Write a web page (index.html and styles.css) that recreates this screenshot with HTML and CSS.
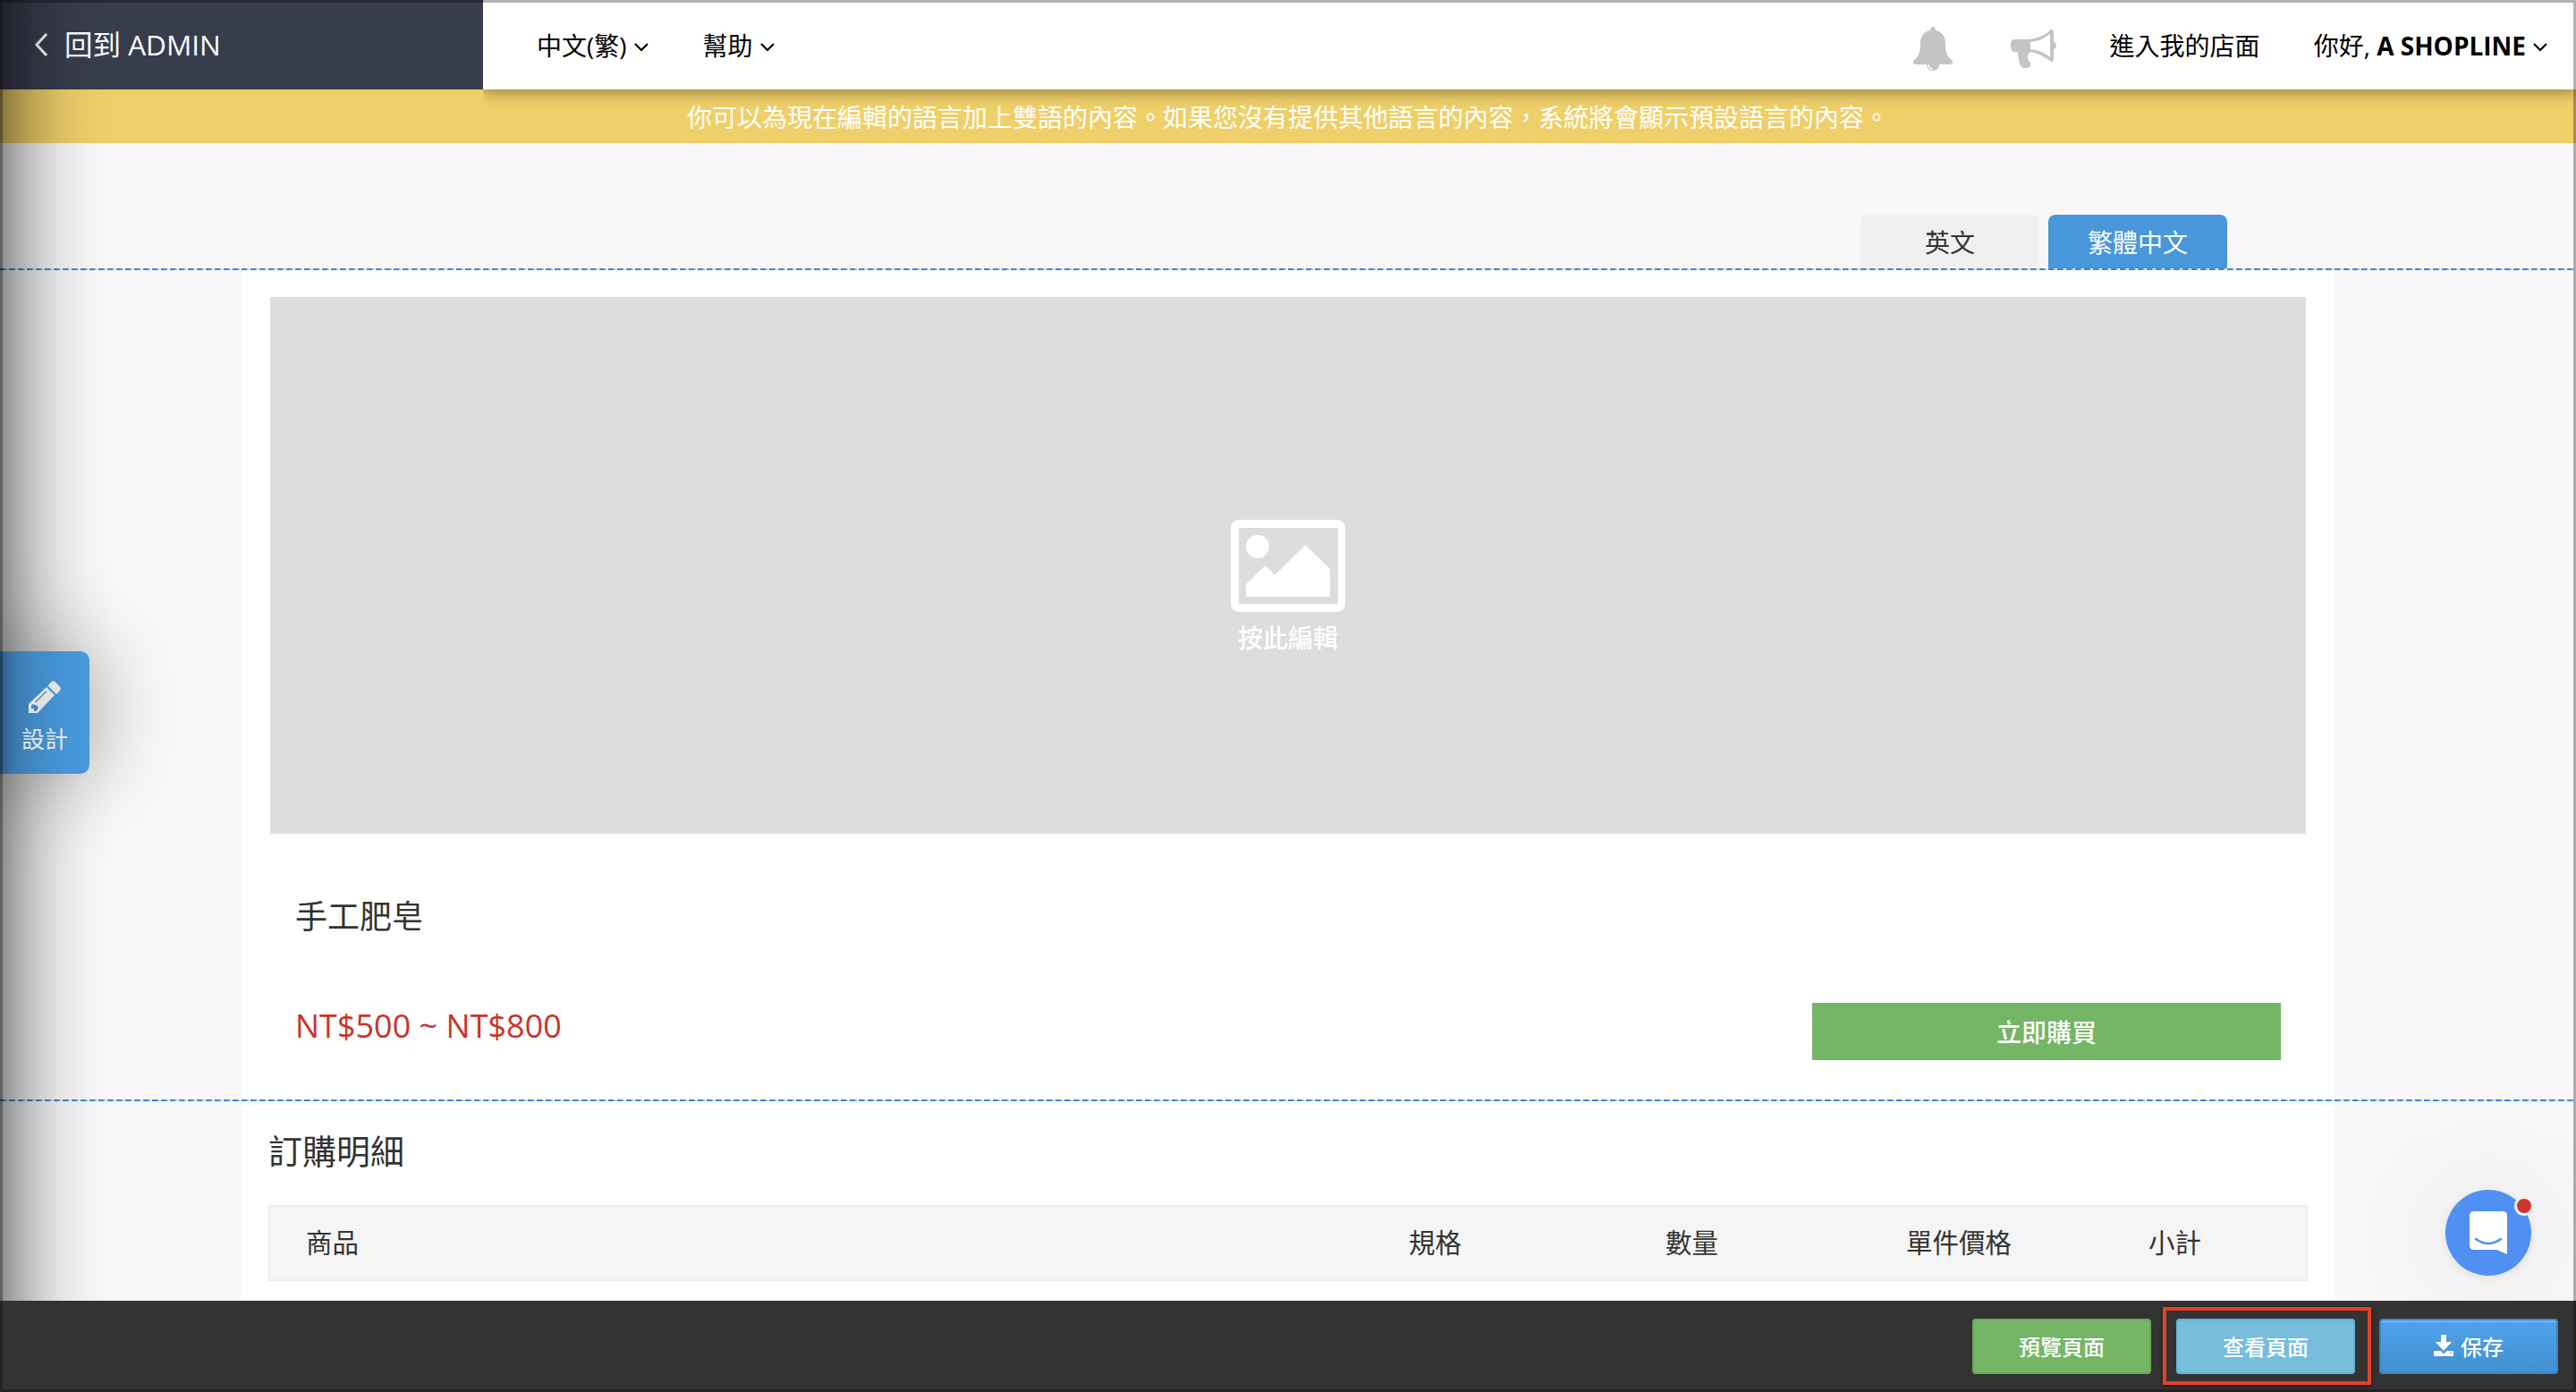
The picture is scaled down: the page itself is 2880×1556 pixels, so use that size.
FILE: index.html
```
<!DOCTYPE html>
<html lang="zh-Hant">
<head>
    <meta charset="UTF-8">
    <meta name="viewport" content="width=device-width, initial-scale=1.0">
    <title>SHOPLINE 頁面編輯</title>
    <link rel="stylesheet" href="styles.css">
</head>
<body>
    <header class="topbar">
        <a class="back-link">
            <svg class="back-icon" width="16" height="28" viewBox="0 0 16 28"><path d="M14 2L3 14L14 26" fill="none" stroke="currentColor" stroke-width="3"/></svg>
            <span>回到 ADMIN</span>
        </a>
        <nav class="topnav">
            <a class="nav-item nav-lang">中文(繁)<svg class="chevron" width="16" height="10" viewBox="0 0 16 10"><path d="M1 1L8 8L15 1" fill="none" stroke="currentColor" stroke-width="2.2"/></svg></a>
            <a class="nav-item nav-help">幫助<svg class="chevron" width="16" height="10" viewBox="0 0 16 10"><path d="M1 1L8 8L15 1" fill="none" stroke="currentColor" stroke-width="2.2"/></svg></a>
            <div class="nav-right">
                <svg class="icon-bell" width="46" height="50" viewBox="0 0 46 50">
                    <path d="M23 0C25 0 26 2 26 4C33 5 37 11 37 18C37 29 39 33 44 37C46 39 45 42 43 42H30C30 46 27 49 23 49S16 46 16 42H3C1 42 0 39 2 37C7 33 9 29 9 18C9 11 13 5 20 4C20 2 21 0 23 0Z"/>
                    <path d="M18 42C18 45 20 47 23 47" fill="none" stroke="#fff" stroke-width="1.4"/>
                </svg>
                <svg class="icon-horn" width="52" height="44" viewBox="0 0 52 44">
                    <path fill-rule="evenodd" d="M5 11H17C29 11 37 7 44 1C46 -1 48 0 48 3V14C52 15 52 21 48 22V33C48 36 46 37 44 35C37 30 31 27 22 25C17 29 19 33 22 38C24 43 16 44 12 42C9 37 8 30 8 25H5C2 25 0 23 0 20V16C0 13 2 11 5 11ZM22 14V22C31 23 38 26 44 31V5C38 10 31 13 22 14Z"/>
                </svg>
                <a class="nav-item nav-store">進入我的店面</a>
                <a class="nav-item nav-user">你好, <b>A SHOPLINE</b><svg class="chevron" width="16" height="10" viewBox="0 0 16 10"><path d="M1 1L8 8L15 1" fill="none" stroke="currentColor" stroke-width="2.2"/></svg></a>
            </div>
        </nav>
    </header>

    <div class="notice">你可以為現在編輯的語言加上雙語的內容。如果您沒有提供其他語言的內容，系統將會顯示預設語言的內容。</div>

    <div class="lang-tabs">
        <button class="tab">英文</button>
        <button class="tab active">繁體中文</button>
    </div>

    <main class="page">
        <section class="section">
            <div class="section-inner product">
                <div class="image-upload">
                    <svg width="128" height="103" viewBox="0 0 128 103" fill="#fff">
                        <path fill-rule="evenodd" d="M11 0H117Q128 0 128 11V92Q128 103 117 103H11Q0 103 0 92V11Q0 0 11 0ZM11 9Q9 9 9 11V92Q9 94 11 94H117Q120 94 120 92V11Q120 9 117 9Z"/>
                        <circle cx="30" cy="30" r="13"/>
                        <path d="M17 72L38.500 51L49 62L83.500 28L111 55V86H17Z"/>
                    </svg>
                    <span>按此編輯</span>
                </div>
                <h2 class="product-title">手工肥皂</h2>
                <div class="product-row">
                    <span class="price">NT$500 ~ NT$800</span>
                    <button class="buy-btn">立即購買</button>
                </div>
            </div>
        </section>
        <section class="section">
            <div class="section-inner order">
                <h2 class="order-title">訂購明細</h2>
                <div class="order-head">
                    <span>商品</span>
                    <span>規格</span>
                    <span>數量</span>
                    <span>單件價格</span>
                    <span>小計</span>
                </div>
            </div>
        </section>
    </main>

    <div class="side-shadow"></div>

    <footer class="footer">
        <button class="btn btn-green">預覽頁面</button>
        <div class="highlight">
            <button class="btn btn-info">查看頁面</button>
        </div>
        <button class="btn btn-blue">
            <svg width="22" height="24" viewBox="0 0 22 24" fill="#fff"><path d="M8 0H14V8H20L11 18L2 8H8Z"/><path fill-rule="evenodd" d="M0 18H7.500L11 21.500L14.500 18H22V24H0ZM18 20V21H20V20Z"/></svg>
            <span>保存</span>
        </button>
    </footer>

    <button class="design-btn">
        <svg width="36" height="36" viewBox="0 0 36 36" fill="#e2e2e2">
            <path d="M20 7L29 16L10 36H0V26ZM5 26L3 28V31H6V34H8L11 31L10 28L7 27Z" fill-rule="evenodd"/>
            <path d="M7.500 24L20 11.500" stroke="#4489c4" stroke-width="1.300"/>
            <path d="M21.500 5.500L25 1.500Q27.500 -1 30 1.500L34.500 6Q37 8.500 35 11L31 15Z"/>
        </svg>
        <span>設計</span>
    </button>

    <div class="chat">
        <svg width="42" height="50" viewBox="0 0 42 50">
            <path d="M5 0H37Q42 0 42 5V48L30 43H5Q0 43 0 38V5Q0 0 5 0Z" fill="#fff"/>
            <path d="M7 31Q21 41 35 31" fill="none" stroke="#5190f3" stroke-width="2.500" stroke-linecap="round"/>
        </svg>
        <i class="chat-dot"></i>
    </div>

    <div class="frame"></div>
</body>
</html>
```
FILE: styles.css
```
* {
    box-sizing: border-box;
    margin: 0;
    padding: 0;
}

body {
    font-family: "Open Sans", "Noto Sans CJK TC", sans-serif;
    font-size: 28px;
    line-height: 40px;
    color: #333;
    background-color: #f8f8f8;
    width: 2880px;
    height: 1556px;
    overflow: hidden;
    position: relative;
    display: flex;
    flex-direction: column;
}

button {
    font-family: inherit;
    font-size: 28px;
    color: #fff;
    border: none;
}

svg {
    display: block;
    flex: none;
}

.topbar {
    display: flex;
    height: 100px;
    flex: none;
    position: relative;
}

.back-link {
    width: 540px;
    padding-left: 38px;
    display: flex;
    align-items: center;
    gap: 18px;
    font-size: 31.500px;
    color: #fff;
    background-color: #383d4d;
}

.topnav {
    flex: 1;
    display: flex;
    align-items: center;
    padding: 2px 32px 0 60px;
    color: #000;
    background-color: #fff;
    box-shadow: 0 2px 16px rgba(0,0,0,0.45);
    clip-path: inset(0 0 -40px 0);
}

.nav-item {
    display: flex;
    align-items: center;
    white-space: pre;
}

.chevron {
    margin-left: 8px;
    margin-top: 3px;
}

.nav-help {
    margin-left: 61px;
}

.nav-right {
    display: flex;
    align-items: center;
    margin-left: auto;
}

.icon-bell,
.icon-horn {
    fill: #c4c4c4;
}

.icon-bell {
    margin-top: 8px;
    margin-right: 64px;
}

.icon-horn {
    margin-top: 8px;
    margin-right: 59px;
}

.nav-user {
    margin-left: 60px;
}

.notice {
    height: 60px;
    line-height: 62px;
    flex: none;
    text-align: center;
    color: #fff;
    background-color: #efcf6a;
}

.lang-tabs {
    display: flex;
    justify-content: flex-end;
    gap: 10px;
    padding: 80px 390px 0 0;
}

.tab {
    width: 200px;
    height: 60px;
    color: #333;
    background-color: #f0f0f0;
    border-radius: 8px 8px 0 0;
}

.tab.active {
    color: #fff;
    background-color: #4897da;
}

/* dashed top rule of each editable section */
.section {
    background: repeating-linear-gradient(90deg, #3c86d2 0 6px, #9cc4ea 6px 8px, transparent 8px 10px) 0 0 / 100% 2px no-repeat;
    padding-top: 2px;
}

.section-inner {
    width: 2340px;
    margin: 0 auto;
    background-color: #fff;
}

.product {
    height: 927px;
    padding: 30px 32px 0;
}

.image-upload {
    height: 600px;
    background-color: #ddd;
    display: flex;
    flex-direction: column;
    align-items: center;
    padding-top: 249px;
    color: #fff;
    font-weight: 500;
}

.image-upload span {
    margin-top: 9px;
}

.product-title {
    margin: 68px 0 0 28px;
    font-size: 36px;
    line-height: 50px;
    font-weight: 400;
}

.product-row {
    display: flex;
    justify-content: space-between;
    margin: 71px 28px 0;
}

.price {
    margin-top: 1px;
    font-size: 36px;
    line-height: 50px;
    color: #c9342b;
}

.buy-btn {
    width: 524px;
    height: 64px;
    font-weight: 500;
    background-color: #74b566;
}

.order {
    height: 400px;
    padding: 29px 30px 0;
}

.order-title {
    font-size: 38px;
    line-height: 52px;
    font-weight: 400;
}

.order-head {
    display: grid;
    grid-template-columns: 1233px 287px 269px 271px 1fr;
    align-items: center;
    height: 85px;
    margin-top: 35px;
    padding: 0 0 2px 40px;
    font-size: 29.500px;
    border: 2px solid #ececec;
    background-color: #f5f5f5;
}

/* bottom action bar */
.footer {
    position: absolute;
    left: 0;
    right: 0;
    bottom: 0;
    height: 102px;
    padding: 7px 20px 0 0;
    display: flex;
    justify-content: flex-end;
    background-color: #333;
}

.btn {
    width: 200px;
    height: 62px;
    margin-top: 13px;
    padding-bottom: 2px;
    display: flex;
    align-items: center;
    justify-content: center;
    gap: 8px;
    font-size: 24px;
    font-weight: 500;
    border-radius: 4px;
}

.btn-green {
    background-color: #74b566;
    border: 2px solid #67ab59;
}

.btn-info {
    margin-top: 9px;
    background-color: #77bddc;
    border: 2px solid #66b2d6;
}

.btn-blue {
    background: linear-gradient(#4fa3ec, #428fcf);
    border: 2px solid #3d84c4;
    box-shadow: inset 0 2px 0 #79b7f0;
}

.highlight {
    width: 233px;
    height: 87px;
    margin: 0 9px 0 13px;
    padding-left: 11px;
    border: 4px solid #e93f25;
    box-shadow: 0 2px 5px rgba(0,0,0,0.5);
}

.design-btn {
    position: absolute;
    left: 0;
    top: 728px;
    width: 100px;
    height: 137px;
    padding-top: 33px;
    display: flex;
    flex-direction: column;
    align-items: center;
    font-size: 26px;
    line-height: 36px;
    color: #e6e6e6;
    border-radius: 0 10px 10px 0;
    background: linear-gradient(90deg, #2c5d87, #3a78ab 15%, #4189c6 40%, #4695d8 75%, #4897da);
    box-shadow: 0 0 100px rgba(0,0,0,0.38);
}

.design-btn span {
    margin-top: 11px;
}

.chat {
    position: absolute;
    left: 2734px;
    top: 1330px;
    width: 96px;
    height: 96px;
    padding: 24px 0 0 27px;
    border-radius: 50%;
    background-color: #5190f3;
    box-shadow: 0 2px 12px rgba(0,0,0,0.08), 0 4px 160px rgba(0,0,0,0.16);
    clip-path: inset(-200px -50px -28px -124px);
}

.chat-dot {
    position: absolute;
    right: -3px;
    top: 7px;
    width: 22px;
    height: 22px;
    border-radius: 50%;
    border: 3px solid #f0f0f0;
    background-color: #cb372e;
}

.side-shadow {
    position: absolute;
    left: 0;
    top: 0;
    bottom: 102px;
    width: 124px;
    pointer-events: none;
    background: linear-gradient(90deg, rgba(0,0,0,0.44), rgba(0,0,0,0.31) 15%, rgba(0,0,0,0.19) 32%, rgba(0,0,0,0.08) 55%, rgba(0,0,0,0.025) 78%, rgba(0,0,0,0.005));
}

.frame {
    position: absolute;
    inset: 0;
    border: 3px solid rgba(0,0,0,0.3);
    pointer-events: none;
}
```
